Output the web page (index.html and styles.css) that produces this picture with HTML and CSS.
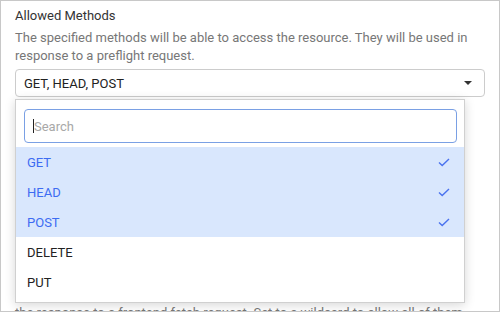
FILE: index.html
```html
<!DOCTYPE html>
<html lang="en">
<head>
  <meta charset="UTF-8" />
  <meta name="viewport" content="width=device-width, initial-scale=1.0"/>
  <title>Allowed Methods</title>
  <link rel="stylesheet" href="styles.css">
</head>
<body>

  <!-- field frame -->
  <div class="frame">
    <div class="field">
      <div class="field-label">Allowed Methods</div>
      <p class="field-help">The specified methods will be able to access the resource. They will be used in response to a preflight request.</p>

      <div class="select">
        <span class="select-value">GET, HEAD, POST</span>
        <span class="caret"></span>
      </div>

      <!-- open dropdown -->
      <div class="dropdown">
        <div class="search">
          <span class="cursor"></span>
          <span class="placeholder">Search</span>
        </div>
        <ul class="options">
          <li class="option selected">GET <svg class="check" width="12" height="9" viewBox="0 0 12 9"><polyline points="1,4.5 4.2,7.6 11,1" /></svg></li>
          <li class="option selected">HEAD <svg class="check" width="12" height="9" viewBox="0 0 12 9"><polyline points="1,4.5 4.2,7.6 11,1" /></svg></li>
          <li class="option selected">POST <svg class="check" width="12" height="9" viewBox="0 0 12 9"><polyline points="1,4.5 4.2,7.6 11,1" /></svg></li>
          <li class="option">DELETE</li>
          <li class="option">PUT</li>
        </ul>
      </div>
    </div>

    <div class="field next-field">
      <p class="field-help">the response to a frontend fetch request. Set to a wildcard to allow all of them.</p>
    </div>
  </div>

</body>
</html>
```

FILE: styles.css
```css
body {
  margin: 0;
  font-family: Roboto, 'Liberation Sans', sans-serif;
  background: #fff;
  color: #333;
}
.frame {
  position: relative;
  width: 500px;
  height: 312px;
  box-sizing: border-box;
  border: 1px solid #c8c8c8;
  overflow: hidden;
  padding: 6px 14px 0;
}
.field-label {
  font-size: 13px;
  line-height: 18px;
  color: #333;
}
.field-help {
  margin: 4px 0 0;
  font-size: 13px;
  line-height: 18px;
  color: #777;
}
.select {
  margin-top: 4px;
  height: 28px;
  box-sizing: border-box;
  border: 1px solid #ccc;
  border-radius: 4px;
  padding: 0 12px 0 8px;
  display: flex;
  align-items: center;
  justify-content: space-between;
  font-size: 13px;
  color: #222;
}
.caret {
  width: 0;
  height: 0;
  border-left: 4px solid transparent;
  border-right: 4px solid transparent;
  border-top: 4px solid #333;
}
.dropdown {
  position: absolute;
  left: 14px;
  top: 98px;
  width: 450px;
  height: 204px;
  box-sizing: border-box;
  background: #fff;
  border: 1px solid #d0d0d0;
  box-shadow: 0 2px 10px rgba(0, 0, 0, 0.16);
  padding: 9px 7px 0 8px;
  z-index: 2;
}
.search {
  height: 34px;
  box-sizing: border-box;
  border: 1px solid #7aa0e4;
  border-radius: 4px;
  display: flex;
  align-items: center;
  padding-left: 8px;
  font-size: 13px;
}
.cursor {
  width: 1px;
  height: 14px;
  background: #222;
}
.placeholder {
  color: #a8a8a8;
}
.options {
  list-style: none;
  margin: 4px -7px 0 -8px;
  padding: 0;
}
.option {
  height: 30px;
  display: flex;
  align-items: center;
  justify-content: space-between;
  padding: 0 14px 0 11px;
  font-size: 13px;
  color: #222;
}
.option.selected {
  background: #d9e7fd;
  color: #3d6cf2;
}
.check polyline {
  fill: none;
  stroke: #4a72ee;
  stroke-width: 1.4;
}
.next-field {
  margin-top: 207px;
}
```
